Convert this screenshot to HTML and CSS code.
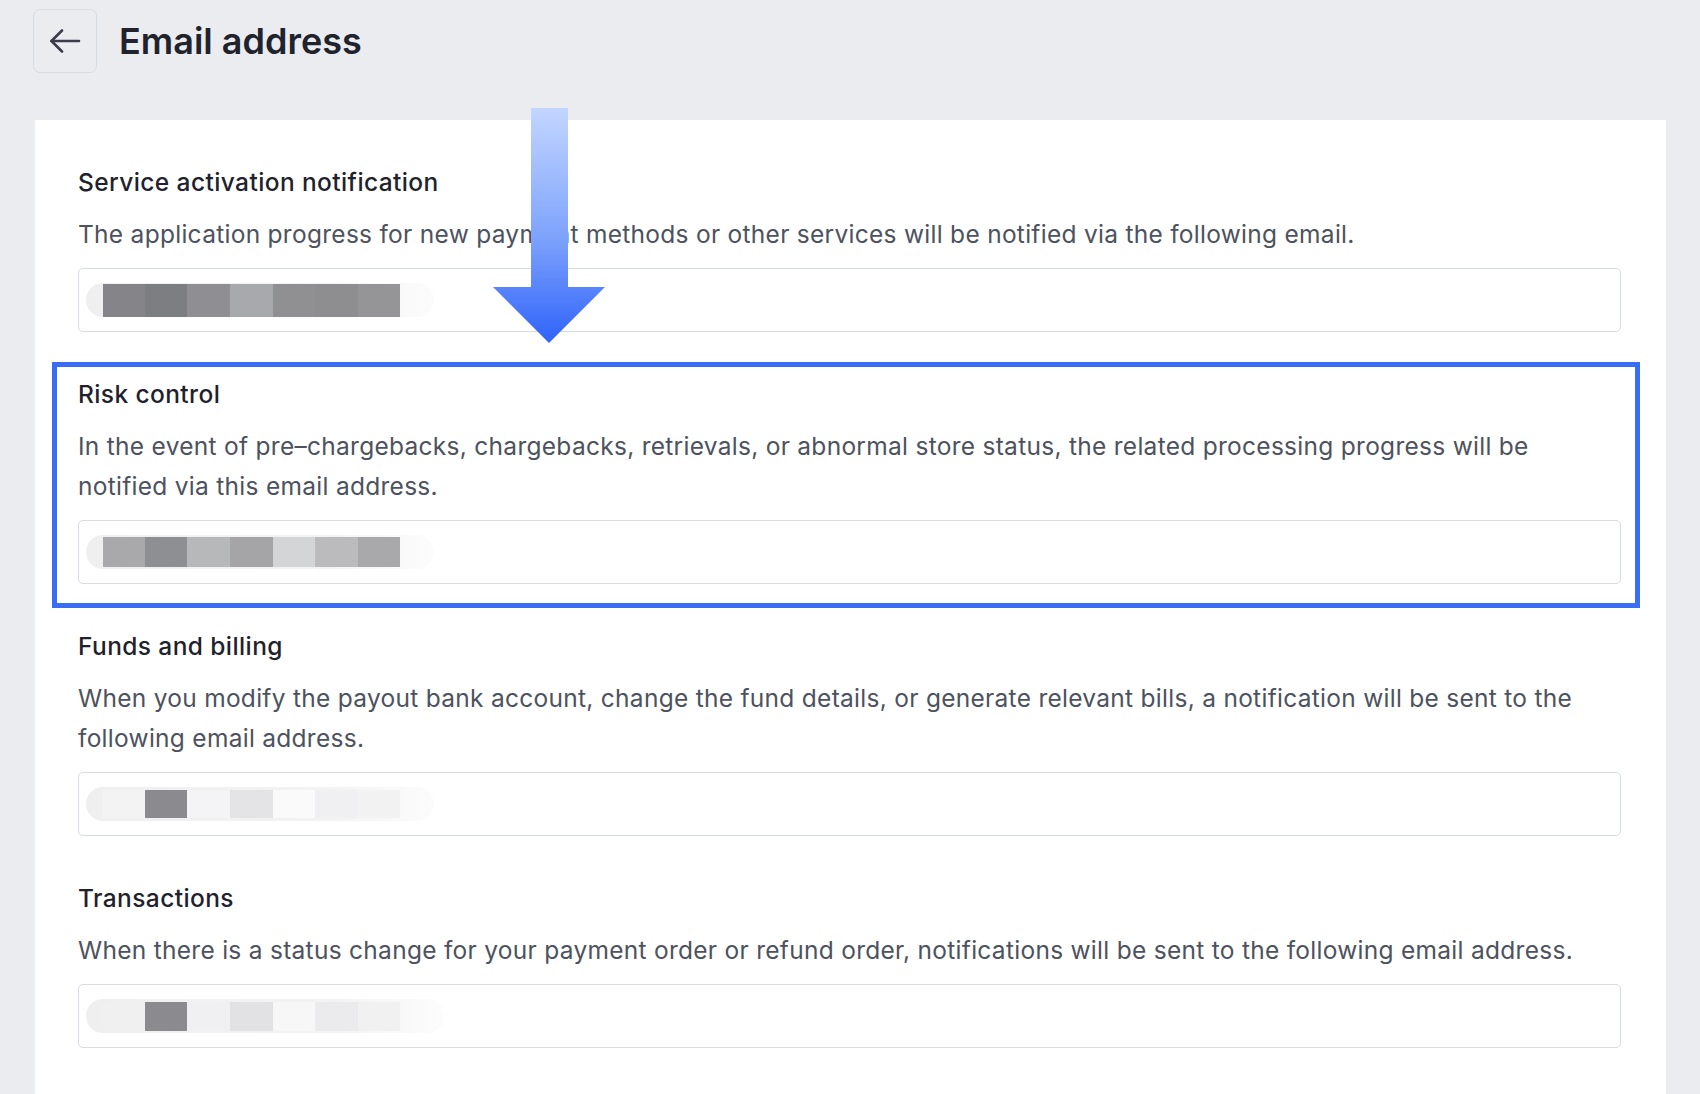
FILE: index.html
```html
<!DOCTYPE html>
<html lang="en">
<head>
<meta charset="utf-8">
<title>Email address</title>
<link rel="stylesheet" href="styles.css">
</head>
<body>
<header class="header">
  <button class="back" type="button" aria-label="Back">
    <svg width="32" height="24" viewBox="0 0 32 24" fill="none" stroke="#3b3e4a" stroke-width="2.6" stroke-linecap="round" stroke-linejoin="round"><path d="M2.5 12H30"/><path d="M13 1.5L2.5 12L13 22.5"/></svg>
  </button>
  <h1 class="page-title">Email address</h1>
</header>

<main class="card">
  <section class="group">
    <h2 class="group-title">Service activation notification</h2>
    <p class="group-desc">The application progress for new payment methods or other services will be notified via the following email.</p>
    <div class="field"><span class="pill"><span class="blocks blocks-a"></span></span></div>
  </section>

  <section class="group group-highlight">
    <div class="highlight"></div>
    <h2 class="group-title">Risk control</h2>
    <p class="group-desc">In the event of pre–chargebacks, chargebacks, retrievals, or abnormal store status, the related processing progress will be<br>notified via this email address.</p>
    <div class="field"><span class="pill"><span class="blocks blocks-b"></span></span></div>
  </section>

  <section class="group">
    <h2 class="group-title">Funds and billing</h2>
    <p class="group-desc">When you modify the payout bank account, change the fund details, or generate relevant bills, a notification will be sent to the<br>following email address.</p>
    <div class="field"><span class="pill"><span class="blocks blocks-c"></span></span></div>
  </section>

  <section class="group">
    <h2 class="group-title">Transactions</h2>
    <p class="group-desc">When there is a status change for your payment order or refund order, notifications will be sent to the following email address.</p>
    <div class="field"><span class="pill pill-long"><span class="blocks blocks-d"></span></span></div>
  </section>
</main>

<div class="pointer" aria-hidden="true">
  <svg width="112" height="236" viewBox="0 0 112 236">
    <defs>
      <linearGradient id="arrowGrad" x1="0" y1="0" x2="0" y2="1">
        <stop offset="0" stop-color="#c3d6ff"/>
        <stop offset="0.55" stop-color="#7ea3fc"/>
        <stop offset="1" stop-color="#2f63fa"/>
      </linearGradient>
    </defs>
    <path d="M38 0H75V179H112L56 235L0 179H38Z" fill="url(#arrowGrad)"/>
  </svg>
</div>
</body>
</html>
```

FILE: styles.css
```css
* {
  box-sizing: border-box;
}

html, body {
  margin: 0;
  padding: 0;
}

body {
  background: #ebecf0;
  font-family: "Inter", "Liberation Sans", Arial, sans-serif;
  color: #1e212b;
  position: relative;
  min-height: 1094px;
  overflow: hidden;
}

.header {
  display: flex;
  align-items: flex-start;
  gap: 22px;
  padding: 9px 0 0 33px;
  height: 120px;
}

.back {
  width: 64px;
  height: 64px;
  border: 1.5px solid #d9dbe4;
  border-radius: 7px;
  background: #ebecf0;
  display: flex;
  align-items: center;
  justify-content: center;
  padding: 0;
  margin: 0;
}

.page-title {
  margin: 0;
  font-size: 36px;
  font-weight: 600;
  line-height: 64px;
  color: #20232d;
  letter-spacing: 0;
}

.card {
  display: block;
  margin-left: 35px;
  width: 1631px;
  background: #ffffff;
  padding: 43px 45px 80px 43px;
  min-height: 974px;
}

.group {
  display: flex;
  flex-direction: column;
}

.group + .group {
  margin-top: 43px;
}

.group-highlight {
  position: relative;
}

.highlight {
  position: absolute;
  top: -13px;
  left: -26px;
  right: -19px;
  bottom: -24px;
  border: 5px solid #3a6df6;
  pointer-events: none;
}

.group-title {
  margin: 0 0 12px;
  font-size: 24.5px;
  font-weight: 500;
  line-height: 39px;
  letter-spacing: 0.4px;
  color: #1f222c;
}

.group-desc {
  margin: 0 0 14px;
  font-size: 24.5px;
  font-weight: 400;
  line-height: 40px;
  letter-spacing: 0.28px;
  color: #4d5260;
}

.field {
  height: 64px;
  border: 1.5px solid #d7dae8;
  border-radius: 5px;
  display: flex;
  align-items: center;
  padding-left: 7px;
}

.pill {
  display: flex;
  align-items: center;
  width: 348px;
  height: 34px;
  border-radius: 17px;
  background: linear-gradient(to right, #efeff0 0, #f3f3f4 70%, rgba(250, 250, 250, 0.6) 100%);
}

.pill-long {
  width: 358px;
}

.blocks {
  display: block;
  margin-left: 17px;
  width: 297px;
  height: 31px;
}

.blocks-a {
  height: 33px;
  background: linear-gradient(to right,
    #858589 0 42px, #7d7e82 42px 84px, #8f8f93 84px 127px, #a8a9ad 127px 170px,
    #909092 170px 212px, #8e8e90 212px 255px, #959597 255px 297px);
}

.blocks-b {
  height: 30px;
  background: linear-gradient(to right,
    #a9a9ab 0 42px, #8e8f93 42px 84px, #b7b8ba 84px 127px, #a5a5a7 127px 170px,
    #d4d5d7 170px 212px, #bbbbbd 212px 255px, #a9a9ab 255px 297px);
}

.blocks-c {
  height: 28px;
  background: linear-gradient(to right,
    #f3f3f4 0 42px, #8b8b8f 42px 84px, #f4f4f6 84px 127px, #e4e4e7 127px 170px,
    #fafafb 170px 212px, #f0f0f2 212px 255px, #f2f2f3 255px 297px);
}

.blocks-d {
  height: 29px;
  background: linear-gradient(to right,
    #f0f0f1 0 42px, #8b8b8f 42px 84px, #f0f0f2 84px 127px, #e2e2e5 127px 170px,
    #f7f7f8 170px 212px, #ebebed 212px 255px, #f1f1f2 255px 297px);
}

.pointer {
  position: absolute;
  left: 493px;
  top: 108px;
  width: 112px;
  height: 236px;
  z-index: 5;
}

.pointer svg {
  display: block;
}
```
